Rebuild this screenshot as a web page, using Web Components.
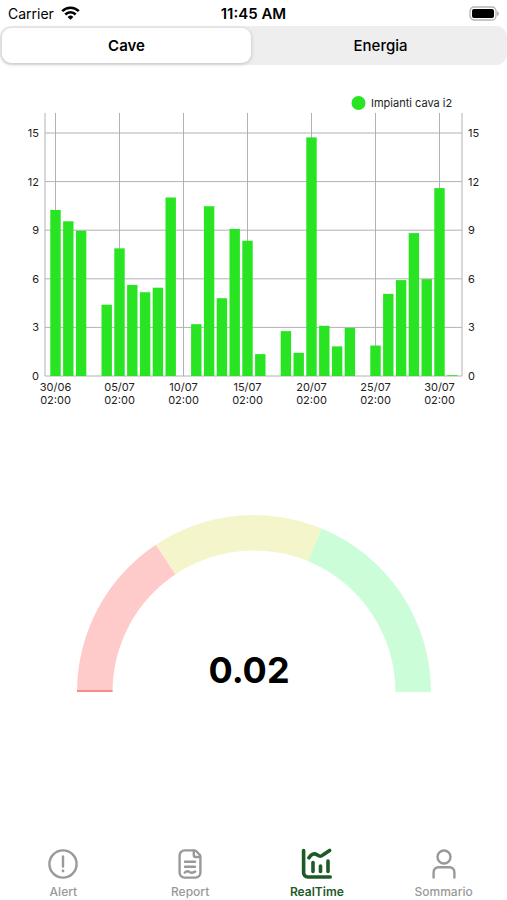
<!DOCTYPE html>
<html lang="it">
<head>
<meta charset="utf-8">
<meta name="viewport" content="width=device-width, initial-scale=1">
<title>Cave - RealTime</title>
<style>
  body {
    margin: 0;
    background: #fff;
    color: #000;
    font-family: Inter, "Liberation Sans", sans-serif;
  }
</style>
</head>
<body>
<realtime-page>
  <status-bar slot="top">
    <span slot="carrier">Carrier</span>
    <span slot="time">11:45 AM</span>
  </status-bar>
  <segmented-control slot="top">
    <segment-item selected>Cave</segment-item>
    <segment-item>Energia</segment-item>
  </segmented-control>

  <bar-chart
    label="Impianti cava i2"
    values="10.25,9.55,8.97,0,4.4,7.88,5.62,5.17,5.45,11.02,0,3.2,10.48,4.8,9.08,8.35,1.35,0,2.77,1.43,14.73,3.1,1.83,2.97,0,1.88,5.07,5.92,8.82,5.98,11.6,0.05"
    ticks="30/06,05/07,10/07,15/07,20/07,25/07,30/07"
    hour="02:00"></bar-chart>
  <half-gauge value="0.02" bands="0.313,0.625"></half-gauge>

  <tab-bar slot="bottom">
    <tab-item href="#alert">
      <svg slot="icon" viewBox="0 0 32 32">
        <circle cx="16" cy="16" r="13.6"/>
        <path d="M16 8.5v10"/>
        <path d="M16 23v.1" stroke-width="2.8"/>
      </svg>
      Alert
    </tab-item>
    <tab-item href="#report">
      <svg slot="icon" viewBox="0 0 32 32">
        <path d="M20.5 2.4H10.600a5 5 0 0 0-5 5v17.200a5 5 0 0 0 5 5h10.800a5 5 0 0 0 5-5V8.500a3 3 0 0 0-1-2l-3-3.200a3 3 0 0 0-1.900-.9Z"/>
        <path d="M19.8 2.800v4.200a2 2 0 0 0 2 2h4.200"/>
        <path d="M11 13.800h10M11 18.800h10M10.800 24.600c2-2 3.400-1.600 4.800-.4s3 .6 5.600-.6"/>
      </svg>
      Report
    </tab-item>
    <tab-item href="#realtime" selected>
      <svg slot="icon" viewBox="0 0 32 32">
        <path d="M2.600 2.600v22.200a4.200 4.200 0 0 0 4.200 4.200h22.400"/>
        <path d="M8 9.800c2.400-3.800 5-5 8-3s4.200 2 6.200 0l6.400-4.400"/>
        <path d="M12 14.500v8.900M19.500 18v5.400M27 13v10.400"/>
      </svg>
      RealTime
    </tab-item>
    <tab-item href="#sommario">
      <svg slot="icon" viewBox="0 0 32 32">
        <circle cx="16" cy="9" r="6.5"/>
        <path d="M5.6 29.500V24a4.800 4.800 0 0 1 4.800-4.800h11.200a4.800 4.800 0 0 1 4.800 4.800v5.500"/>
      </svg>
      Sommario
    </tab-item>
  </tab-bar>
</realtime-page>

<script>
class RealtimePage extends HTMLElement {
  constructor() {
    super();
    this.attachShadow({ mode: "open" });
    this.shadowRoot.innerHTML = `
    <style>
      :host {
        display: flex;
        flex-direction: column;
        min-height: 100vh;
      }
      main {
        flex: 1;
        display: flex;
        flex-direction: column;
        gap: 104px;
        padding-top: 24px;
      }
    </style>
    <header><slot name="top"></slot></header>
    <main><slot></slot></main>
    <slot name="bottom"></slot>
    `;
  }
}
customElements.define("realtime-page", RealtimePage);

class StatusBar extends HTMLElement {
  constructor() {
    super();
    this.attachShadow({ mode: "open" });
    this.shadowRoot.innerHTML = `
    <style>
      :host {
        display: grid;
        grid-template-columns: 1fr auto 1fr;
        align-items: center;
        height: 26px;
        padding: 0 8px;
        font-size: 14px;
      }
      .left {
        display: flex;
        align-items: center;
        gap: 7px;
      }
      .time {
        font-size: 15px;
        font-weight: 600;
      }
      .battery {
        justify-self: end;
      }
      svg {
        display: block;
      }
    </style>
    <div class="left">
      <slot name="carrier"></slot>
      <svg width="19" height="14" viewBox="0 0 19 14" fill="none" stroke="#000" stroke-width="2.6">
        <path d="M1.2 5.2a11.800 11.800 0 0 1 16.600 0"/>
        <path d="M4.300 8.500a7.300 7.300 0 0 1 10.400 0"/>
        <path d="M9.500 13.800 6.600 10.900a4.200 4.200 0 0 1 5.800 0Z" fill="#000" stroke="none"/>
      </svg>
    </div>
    <div class="time"><slot name="time"></slot></div>
    <svg class="battery" width="30" height="15" viewBox="0 0 30 15">
      <rect x="1" y="1" width="26" height="13" rx="4" fill="#fff" stroke="#b4b4b4" stroke-width="1.3"/>
      <rect x="3" y="3" width="22" height="9" rx="2" fill="#000"/>
      <path d="M28 5v5q2-1 2-2.500t-2-2.500Z" fill="#b4b4b4"/>
    </svg>
    `;
  }
}
customElements.define("status-bar", StatusBar);

class SegmentedControl extends HTMLElement {
  constructor() {
    super();
    this.attachShadow({ mode: "open" });
    this.shadowRoot.innerHTML = `
    <style>
      :host {
        display: flex;
        gap: 5px;
        height: 35px;
        padding: 2px;
        border-radius: 11px;
        background: #eeeeee;
      }
    </style>
    <slot></slot>
    `;
    this.addEventListener("click", (e) => {
      const item = e.target.closest("segment-item");
      if (!item) return;
      for (const child of this.children) {
        child.toggleAttribute("selected", child === item);
      }
    });
  }
}
customElements.define("segmented-control", SegmentedControl);

class SegmentItem extends HTMLElement {
  constructor() {
    super();
    this.attachShadow({ mode: "open" });
    this.shadowRoot.innerHTML = `
    <style>
      :host {
        display: flex;
        flex: 1;
      }
      button {
        flex: 1;
        margin: 0;
        padding: 0;
        border: 0;
        border-radius: 9px;
        background: none;
        color: #000;
        font: 500 15px Inter, "Liberation Sans", sans-serif;
        cursor: pointer;
      }
      :host([selected]) button {
        background: #fff;
        font-weight: 600;
        box-shadow: 0 1px 4px rgba(0, 0, 0, 0.2);
      }
    </style>
    <button type="button"><slot></slot></button>
    `;
  }
}
customElements.define("segment-item", SegmentItem);

class BarChart extends HTMLElement {
  constructor() {
    super();
    this.attachShadow({ mode: "open" });
  }

  connectedCallback() {
    const values = this.getAttribute("values").split(",").map(Number);
    const ticks = this.getAttribute("ticks").split(",");
    const hour = this.getAttribute("hour");
    const label = this.getAttribute("label");

    const left = 45, right = 462, top = 24, bottom = 287;
    const x = (i) => 55.5 + i * 12.8;
    const y = (v) => bottom - v * 16.2;

    let grid = "";
    let bars = "";
    let texts = "";

    for (let v = 0; v <= 15; v += 3) {
      grid += `<path d="M${left} ${y(v)}H${right}"/>`;
      texts += `<text x="39" y="${y(v) + 4}" text-anchor="end">${v}</text>`;
      texts += `<text x="468" y="${y(v) + 4}">${v}</text>`;
    }
    ticks.forEach((day, i) => {
      const cx = x(i * 5);
      grid += `<path d="M${cx} ${top}V${bottom}"/>`;
      texts += `<text x="${cx}" y="302" text-anchor="middle">${day}</text>`;
      texts += `<text x="${cx}" y="315" text-anchor="middle">${hour}</text>`;
    });
    values.forEach((v, i) => {
      if (v) bars += `<rect x="${x(i) - 5.2}" y="${y(v)}" width="10.4" height="${v * 16.2}"/>`;
    });

    this.shadowRoot.innerHTML = `
    <style>
      :host {
        display: block;
      }
      svg {
        display: block;
        width: 100%;
      }
      .grid {
        stroke: #b2b2b5;
        stroke-width: 1;
      }
      .bars, circle {
        fill: #29e423;
      }
      text {
        font-size: 11px;
        fill: #222;
      }
    </style>
    <svg viewBox="0 0 507 321" role="img" aria-label="${label}">
      <circle cx="358.5" cy="14" r="7"/>
      <text x="371" y="18">${label}</text>
      <g class="grid">
        ${grid}
        <path d="M${left} ${top}V${bottom}M${right} ${top}V${bottom}"/>
      </g>
      <g class="bars">${bars}</g>
      ${texts}
    </svg>
    `;
  }
}
customElements.define("bar-chart", BarChart);

class HalfGauge extends HTMLElement {
  constructor() {
    super();
    this.attachShadow({ mode: "open" });
  }

  // ring slice between two fractions of the half circle, left to right
  slice(from, to) {
    const cx = 254, cy = 178, outer = 177, inner = 141.5;
    const point = (r, f) => {
      const a = Math.PI * (1 - f);
      return `${(cx + r * Math.cos(a)).toFixed(2)} ${(cy - r * Math.sin(a)).toFixed(2)}`;
    };
    return `M${point(outer, from)}A${outer} ${outer} 0 0 1 ${point(outer, to)}` +
      `L${point(inner, to)}A${inner} ${inner} 0 0 0 ${point(inner, from)}Z`;
  }

  connectedCallback() {
    const value = this.getAttribute("value");
    const [low, high] = this.getAttribute("bands").split(",").map(Number);

    this.shadowRoot.innerHTML = `
    <style>
      :host {
        display: block;
      }
      svg {
        display: block;
        width: 100%;
      }
      text {
        font-size: 36px;
        font-weight: 700;
      }
    </style>
    <svg viewBox="0 0 507 180">
      <path d="${this.slice(0, low)}" fill="#ffcaca"/>
      <path d="${this.slice(low, high)}" fill="#f5f5cb"/>
      <path d="${this.slice(high, 1)}" fill="#cafdd8"/>
      <path d="M77 177H112.5" stroke="#fa8b8b" stroke-width="2"/>
      <text x="249" y="169" text-anchor="middle">${value}</text>
    </svg>
    `;
  }
}
customElements.define("half-gauge", HalfGauge);

class TabBar extends HTMLElement {
  constructor() {
    super();
    this.attachShadow({ mode: "open" });
    this.shadowRoot.innerHTML = `
    <style>
      :host {
        display: block;
      }
      nav {
        display: flex;
      }
    </style>
    <nav><slot></slot></nav>
    `;
  }
}
customElements.define("tab-bar", TabBar);

class TabItem extends HTMLElement {
  constructor() {
    super();
    this.attachShadow({ mode: "open" });
    this.shadowRoot.innerHTML = `
    <style>
      :host {
        display: block;
        flex: 1;
        color: #999999;
      }
      :host([selected]) {
        color: #1d5a26;
      }
      a {
        display: flex;
        flex-direction: column;
        align-items: center;
        gap: 4px;
        color: inherit;
        font-size: 12px;
        font-weight: 500;
        line-height: 16px;
        text-decoration: none;
      }
      :host([selected]) a {
        font-weight: 600;
      }
      ::slotted(svg) {
        width: 32px;
        height: 32px;
        fill: none;
        stroke: currentColor;
        stroke-width: 2.4;
        stroke-linecap: round;
        stroke-linejoin: round;
      }
      :host([selected]) ::slotted(svg) {
        stroke-width: 3.6;
      }
    </style>
    <a href="${this.getAttribute("href")}">
      <slot name="icon"></slot>
      <span><slot></slot></span>
    </a>
    `;
  }
}
customElements.define("tab-item", TabItem);
</script>
</body>
</html>
